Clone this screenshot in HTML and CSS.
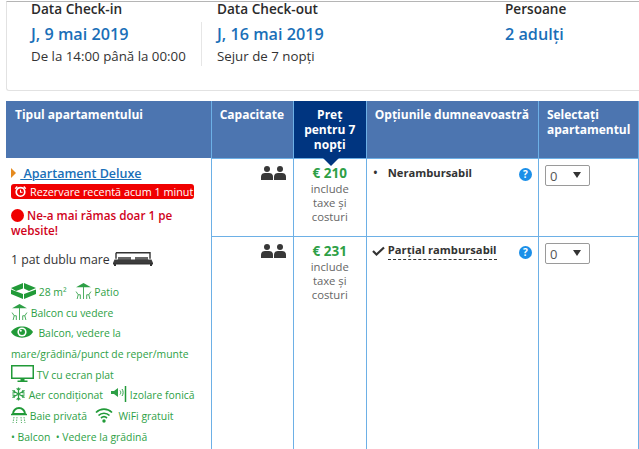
FILE: index.html
```html
<!DOCTYPE html>
<html lang="ro">
<head>
    <meta charset="UTF-8">
    <meta name="viewport" content="width=device-width, initial-scale=1.0">
    <title>Apartament Deluxe</title>
    <link rel="stylesheet" href="styles.css">
</head>
<body>
    <!-- Stay summary -->
    <div class="summary">
        <div class="summary-col col-in">
            <div class="summary-label">Data Check-in</div>
            <div class="summary-value">J, 9 mai 2019</div>
            <div class="summary-note">De la 14:00 până la 00:00</div>
        </div>
        <div class="summary-divider"></div>
        <div class="summary-col col-out">
            <div class="summary-label">Data Check-out</div>
            <div class="summary-value">J, 16 mai 2019</div>
            <div class="summary-note">Sejur de 7 nopți</div>
        </div>
        <div class="summary-col col-people">
            <div class="summary-label">Persoane</div>
            <div class="summary-value">2 adulți</div>
        </div>
    </div>

    <!-- Room table -->
    <table class="rooms">
        <colgroup>
            <col class="w-type"><col class="w-cap"><col class="w-price"><col class="w-opt"><col class="w-sel">
        </colgroup>
        <thead>
            <tr>
                <th class="th-type">Tipul apartamentului</th>
                <th>Capacitate</th>
                <th class="th-price">Preț pentru 7 nopți<span class="price-notch"></span></th>
                <th>Opțiunile dumneavoastră</th>
                <th>Selectați apartamentul</th>
            </tr>
        </thead>
        <tbody>
            <tr class="row-a">
                <td rowspan="2" class="room">
                    <div class="room-name">
                        <span class="room-arrow"></span>
                        <a href="#">&nbsp;Apartament Deluxe</a>
                    </div>
                    <div class="recent">
                        <svg class="ic-clock" viewBox="0 0 14 14"><circle cx="7" cy="7.5" r="4.6" fill="none" stroke="#fff" stroke-width="1.8"/><path d="M7 5v2.8h2.2" fill="none" stroke="#fff" stroke-width="1.2"/><path d="M0.8 3.4 3 1.2l1.2 1.1L2 4.6zM13.2 3.4 11 1.2 9.8 2.3 12 4.6z" fill="#fff"/></svg>
                        Rezervare recentă acum 1 minut
                    </div>
                    <div class="left-msg"><span class="red-dot"></span> Ne-a mai rămas doar 1 pe website!</div>
                    <div class="bed-line">1 pat dublu mare
                        <svg class="ic-bed" width="40" height="14" viewBox="0 0 40 14"><path d="M3 .8h34v6M3 .8v6" fill="none" stroke="#333" stroke-width="1.400"/><path d="M5 5h13v3H5zM22 5h13v3H22z" fill="#666"/><path d="M1.500 7.500h37L40 11H0z" fill="#3c3c3c"/><path d="M0 11h40v1.500h-1V14h-2v-1.500H3V14H1v-1.500H0z" fill="#333"/></svg>
                    </div>
                    <div class="facilities">
                        <div class="fac-line">
                            <svg class="ic-tall" width="25" height="16" viewBox="0 0 25 16"><path d="M0 5 12 0v5.500L5 8zM13 0l12 5-7 3-5-2.500zM0 6.500 12 11v5L0 11zM25 6.500 13 11v5l12-5z" fill="#219a38"/></svg>
                            28 m² &nbsp;
                            <svg class="ic-tall" width="17" height="17" viewBox="0 0 16 16"><path d="M1 5 8 1l7 4z" fill="#2e9f46"/><path d="M8 4v12M1 9l2 3-1 4M3 12h2v4M15 9l-2 3 1 4M13 12h-2v4" fill="none" stroke="#2e9f46" stroke-width="0.8"/></svg>
                            Patio
                        </div>
                        <div class="fac-line">
                            <svg class="ic-tall" width="17" height="17" viewBox="0 0 16 16"><path d="M1 5 8 1l7 4z" fill="#2e9f46"/><path d="M8 4v12M1 9l2 3-1 4M3 12h2v4M15 9l-2 3 1 4M13 12h-2v4" fill="none" stroke="#2e9f46" stroke-width="0.8"/></svg>
                            Balcon cu vedere
                        </div>
                        <div class="fac-line fac-eye">
                            <svg class="ic-tall" width="22" height="16" viewBox="0 0 22 15"><path d="M0 7.500C4 0 18 0 22 7.500 18 15 4 15 0 7.500z" fill="#219a38"/><circle cx="11" cy="7.500" r="4.600" fill="#fff"/><circle cx="11" cy="7.500" r="3" fill="#219a38"/><circle cx="9.800" cy="6.300" r="1" fill="#fff"/></svg>
                            &nbsp;Balcon, vedere la mare/grădină/punct de reper/munte
                        </div>
                        <div class="fac-line">
                            <svg class="ic-tall" width="23" height="17" viewBox="0 0 23 17"><rect x="0.750" y="0.750" width="21.500" height="12.500" fill="none" stroke="#219a38" stroke-width="1.500"/><path d="M9.500 14h4v1.500h3V17h-10v-1.500h3z" fill="#219a38"/></svg>
                            TV cu ecran plat
                        </div>
                        <div class="fac-line">
                            <svg class="ic-tall" width="15" height="16" viewBox="0 0 16 16"><path d="M8 1v14M1.500 4.200l13 7.600M14.500 4.200l-13 7.600M6 2l2 2 2-2M6 14l2-2 2 2M1.500 7l2.500-.5L3.500 4M14.500 9l-2.500.5.5 2.500M14.500 7 12 6.500 12.500 4M1.500 9l2.500.5-.5 2.500" fill="none" stroke="#2e9f46" stroke-width="1.300"/></svg>
                            Aer condiționat &nbsp;
                            <svg class="ic-tall" width="16" height="16" viewBox="0 0 16 16"><path d="M0 5h3l4-3v9L3 8H0z" fill="#2e9f46"/><path d="M9 4.500c1 1 1 3 0 4M11 3c1.500 2 1.500 5 0 7" fill="none" stroke="#2e9f46"/><path d="M14.500 0v16" stroke="#219a38" stroke-width="1.500"/></svg>
                            Izolare fonică
                        </div>
                        <div class="fac-line">
                            <svg class="ic-tall" width="16" height="16" viewBox="0 0 16 16"><path d="M2 7a6 6 0 0 1 12 0z" fill="none" stroke="#219a38" stroke-width="2"/><path d="M0 7.500h16" stroke="#219a38" stroke-width="1.500"/><path d="M3 10l-1 6M6 10l-.5 6M10 10l.5 6M13 10l1 6" stroke="#2e9f46" stroke-width="0.800" stroke-dasharray="1.500 1"/></svg>
                            Baie privată &nbsp;
                            <svg class="ic-tall" width="18" height="16" viewBox="0 0 18 16"><path d="M1 5.500c4.500-4.500 11.500-4.500 16 0M3.500 8.500c3-3 8-3 11 0M6 11c1.700-1.500 4.300-1.500 6 0" fill="none" stroke="#219a38" stroke-width="1.700"/><circle cx="9" cy="14" r="1.700" fill="#219a38"/></svg>
                            &nbsp;WiFi gratuit
                        </div>
                        <div class="fac-line">• Balcon &nbsp;• Vedere la grădină</div>
                    </div>
                </td>
                <td class="cap">
                    <svg width="25" height="14" viewBox="0 0 25 14"><use href="#person"/></svg>
                </td>
                <td class="price">
                    <div class="amount">€ 210</div>
                    <div class="price-note">include taxe și costuri</div>
                </td>
                <td class="option">
                    <div class="option-line">
                        <span class="bullet">•</span><b class="option-name">Nerambursabil</b>
                        <span class="help">?</span>
                    </div>
                </td>
                <td class="select-cell">
                    <div class="qty">0<span class="qty-arrow"></span></div>
                </td>
            </tr>
            <tr class="row-b">
                <td class="cap">
                    <svg width="25" height="14" viewBox="0 0 25 14"><use href="#person"/></svg>
                </td>
                <td class="price">
                    <div class="amount">€ 231</div>
                    <div class="price-note">include taxe și costuri</div>
                </td>
                <td class="option">
                    <div class="option-line">
                        <svg class="ic-check" width="13" height="10" viewBox="0 0 13 10"><path d="M1 5l3.500 3.500L12 1.500" fill="none" stroke="#333" stroke-width="2.200"/></svg>
                        <b class="option-name dashed">Parțial rambursabil</b>
                        <span class="help">?</span>
                    </div>
                </td>
                <td class="select-cell">
                    <div class="qty">0<span class="qty-arrow"></span></div>
                </td>
            </tr>
        </tbody>
    </table>

    <!-- Shared people icon -->
    <svg class="defs" width="0" height="0">
        <defs>
            <g id="person" fill="#383838">
                <circle cx="6" cy="3" r="3"/>
                <path d="M0 14v-3.500C0 8 2 7 4 7h4c2 0 4 1 4 3.500V14z"/>
                <circle cx="19" cy="3" r="3"/>
                <path d="M13 14v-3.500C13 8 15 7 17 7h4c2 0 4 1 4 3.500V14z"/>
            </g>
        </defs>
    </svg>
</body>
</html>
```

FILE: styles.css
```css
/* Color Palette */
:root {
    --head-bg: #4c75b0;
    --head-dark: #003580;
    --line: #6db0e6;
    --link: #1a6fb8;
    --text: #333333;
    --green: #2e9f46;
}

/* General Body Style */
body {
    margin: 0;
    height: 449px;
    overflow: hidden;
    background: #ffffff;
    color: var(--text);
    font-family: "Open Sans", "Noto Sans", sans-serif;
    font-size: 12px;
}

.defs {
    position: absolute;
}

/* Stay summary */
.summary {
    display: flex;
    height: 88px;
    margin: 1px 0 10px 6px;
    border-top: 1px solid #b5b5b5;
    border-left: 1px solid #e2e2e2;
    border-bottom: 1px solid #e2e2e2;
    border-radius: 0 0 0 3px;
}

.summary-col {
    box-sizing: border-box;
}

.col-in {
    width: 194px;
    padding-left: 24px;
}

.summary-divider {
    width: 1px;
    height: 44px;
    margin-top: 20px;
    background: #e6e6e6;
}

.col-out {
    width: 303px;
    padding-left: 15px;
}

.summary-label {
    font-size: 13.600px;
    font-weight: 600;
    line-height: 13px;
    color: #2b2b2b;
}

.summary-value {
    margin-top: 9px;
    font-size: 16.200px;
    font-weight: 600;
    line-height: 20px;
    color: var(--link);
}

.summary-note {
    margin-top: 2px;
    font-size: 13.300px;
    line-height: 20px;
    white-space: nowrap;
}

/* Room table */
.rooms {
    width: 633px;
    margin-left: 6px;
    border-collapse: collapse;
    table-layout: fixed;
}

.w-type { width: 205px; }
.w-cap { width: 82px; }
.w-price { width: 73px; }
.w-opt { width: 172px; }
.w-sel { width: 100px; }

.rooms th {
    position: relative;
    height: 57px;
    padding: 6px 8px 0;
    box-sizing: border-box;
    background: var(--head-bg);
    border: 1px solid var(--line);
    border-top: 0;
    border-bottom: 0;
    color: #ffffff;
    font-size: 12px;
    font-weight: 700;
    line-height: 15px;
    text-align: left;
    vertical-align: top;
}

.rooms th.th-type {
    padding-left: 9px;
    border-left: 0;
}

.rooms th.th-price {
    background: var(--head-dark);
    text-align: center;
    padding: 6px 6px 0;
}

.price-notch {
    position: absolute;
    left: 28px;
    bottom: -8px;
    border-left: 9px solid transparent;
    border-right: 9px solid transparent;
    border-top: 9px solid var(--head-dark);
}

.rooms td {
    box-sizing: border-box;
    padding: 0;
    border: 1px solid var(--line);
    vertical-align: top;
}

.row-a td {
    height: 78px;
}

.row-b td {
    height: 216px;
}

.rooms td.room {
    border: 0;
    border-right: 1px solid var(--line);
    padding: 8px 0 0 5px;
}

/* Room column */
.room-name {
    font-size: 12.500px;
    font-weight: 600;
    line-height: 16px;
}

.room-name a {
    margin-left: 1px;
    color: var(--link);
    text-decoration: underline;
}

.room-arrow {
    display: inline-block;
    border-top: 5px solid transparent;
    border-bottom: 5px solid transparent;
    border-left: 5px solid #e58a1f;
}

.recent {
    display: inline-flex;
    align-items: center;
    gap: 3px;
    margin-top: 2px;
    padding: 0 1px 0 3px;
    height: 15px;
    background: #f00000;
    border-radius: 3px;
    color: #ffffff;
    font-size: 10.800px;
    white-space: nowrap;
}

.ic-clock {
    width: 13px;
    height: 13px;
}

.left-msg {
    max-width: 175px;
    margin-top: 6px;
    color: #d0021b;
    font-size: 11.700px;
    font-weight: 600;
    line-height: 15px;
}

.red-dot {
    display: inline-block;
    width: 13px;
    height: 13px;
    border-radius: 50%;
    background: #f00000;
    vertical-align: -2px;
}

.bed-line {
    margin-top: 13px;
    font-size: 12.300px;
    line-height: 18px;
    white-space: nowrap;
}

.ic-bed {
    vertical-align: -2px;
}

.facilities {
    margin-top: 13px;
    color: var(--green);
    font-size: 10.400px;
}

.facilities svg.ic-tall {
    margin-top: -6px;
    vertical-align: -3px;
}

.fac-line {
    height: 20.700px;
    line-height: 20.700px;
    white-space: nowrap;
}

.fac-eye {
    height: 41.400px;
    white-space: normal;
}

/* Capacity column */
.rooms td.cap {
    padding: 7px 7px 0 0;
    text-align: right;
}

/* Price column */
.rooms td.price {
    padding-top: 5px;
    padding-left: 12px;
    padding-right: 12px;
    text-align: center;
}

.amount {
    color: var(--green);
    font-size: 13.500px;
    font-weight: 700;
    line-height: 18px;
}

.price-note {
    color: #666666;
    font-size: 11.300px;
    line-height: 14px;
}

/* Options column */
.rooms td.option {
    padding: 6px 6px 0 5px;
}

.option-line {
    display: flex;
    align-items: flex-start;
    line-height: 15px;
}

.bullet {
    width: 14px;
    padding-left: 1px;
    font-size: 14px;
}

.option-name {
    margin-left: 1px;
    font-size: 11.200px;
    font-weight: 700;
}

.ic-check {
    margin-top: 3px;
}

.option-name.dashed {
    margin-left: 3px;
    border-bottom: 1px dashed #333333;
    line-height: 14px;
    padding-bottom: 2px;
}

.help {
    width: 13px;
    height: 13px;
    margin-left: auto;
    margin-top: 3px;
    border-radius: 50%;
    background: #1b8fe8;
    color: #ffffff;
    font-size: 10px;
    font-weight: 700;
    line-height: 13px;
    text-align: center;
}

/* Select column */
.rooms td.select-cell {
    padding: 6px 0 0 6px;
}

.qty {
    position: relative;
    box-sizing: border-box;
    width: 45px;
    height: 21px;
    padding-left: 4px;
    border: 1px solid #9a9a9a;
    border-radius: 2px;
    color: #555555;
    font-size: 13px;
    line-height: 21px;
}

.qty-arrow {
    position: absolute;
    top: 6px;
    right: 8px;
    border-left: 4px solid transparent;
    border-right: 4px solid transparent;
    border-top: 6px solid #333333;
}
```
